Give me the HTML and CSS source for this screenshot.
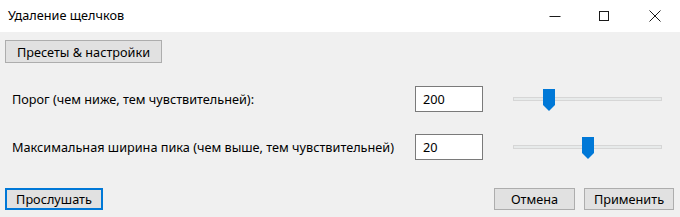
FILE: index.html
```html
<!DOCTYPE html>
<html lang="ru">
<head>
<meta charset="utf-8">
<title>Удаление щелчков</title>
<link rel="stylesheet" href="styles.css">
</head>
<body>
<div class="window">
  <div class="titlebar">
    <span class="title">Удаление щелчков</span>
    <div class="controls">
      <span class="ctl">
        <svg width="12" height="12" viewBox="0 0 12 12"><path d="M0.5 6.5H11.5" stroke="#1a1a1a" stroke-width="1"/></svg>
      </span>
      <span class="ctl">
        <svg width="12" height="12" viewBox="0 0 12 12"><rect x="1.5" y="1.5" width="9" height="9" fill="none" stroke="#1a1a1a" stroke-width="1"/></svg>
      </span>
      <span class="ctl">
        <svg width="12" height="12" viewBox="0 0 12 12"><path d="M0.5 0.5L11.5 11.5M11.5 0.5L0.5 11.5" stroke="#1a1a1a" stroke-width="1"/></svg>
      </span>
    </div>
  </div>
  <div class="content">
    <button class="btn presets">Пресеты &amp; настройки</button>
    <div class="rows">
      <div class="row">
        <span class="label">Порог (чем ниже, тем чувствительней):</span>
        <div class="textbox">200</div>
        <div class="slider">
          <div class="track"></div>
          <svg class="thumb" style="left:30px" width="12" height="22" viewBox="0 0 12 22"><path d="M0 0H12V16L6 22L0 16Z" fill="#0078d7"/></svg>
        </div>
      </div>
      <div class="row">
        <span class="label">Максимальная ширина пика (чем выше, тем чувствительней)</span>
        <div class="textbox">20</div>
        <div class="slider">
          <div class="track"></div>
          <svg class="thumb" style="left:69px" width="12" height="22" viewBox="0 0 12 22"><path d="M0 0H12V16L6 22L0 16Z" fill="#0078d7"/></svg>
        </div>
      </div>
    </div>
    <div class="footer">
      <button class="btn focused listen">Прослушать</button>
      <div class="spacer"></div>
      <button class="btn cancel">Отмена</button>
      <button class="btn apply">Применить</button>
    </div>
  </div>
</div>
</body>
</html>
```
FILE: styles.css
```css
html, body {
  margin: 0;
  padding: 0;
  background: #f0f0f0;
}
body {
  font-family: "Noto Sans", "Open Sans", sans-serif;
  font-size: 12.7px;
  color: #000;
}
.window {
  width: 680px;
  height: 217px;
  display: flex;
  flex-direction: column;
  background: #f0f0f0;
  overflow: hidden;
}
.titlebar {
  height: 32px;
  background: #fff;
  display: flex;
  align-items: center;
  justify-content: space-between;
  flex-shrink: 0;
}
.title {
  padding-left: 8px;
  font-size: 12.7px;
  color: #000;
  margin-top: -2px;
}
.controls {
  display: flex;
  height: 32px;
  align-items: center;
}
.ctl {
  width: 52px;
  display: flex;
  justify-content: center;
  align-items: center;
}
.ctl:nth-child(1) { width: 46px; }
.ctl:nth-child(3) { width: 50px; }
.content {
  display: flex;
  flex-direction: column;
  padding: 8px 6px 0 5px;
}
.btn {
  font-family: inherit;
  font-size: 12.7px;
  color: #000;
  background: #e1e1e1;
  border: 1px solid #adadad;
  border-radius: 0;
  padding: 0;
  margin: 0;
  display: flex;
  align-items: center;
  justify-content: center;
  box-sizing: border-box;
}
.presets {
  width: 157px;
  height: 23px;
}
.rows {
  display: flex;
  flex-direction: column;
  gap: 22px;
  margin-top: 23px;
}
.row {
  display: grid;
  grid-template-columns: 403px 68px 179px;
  align-items: center;
  height: 26px;
  padding-left: 7px;
}
.label {
  white-space: nowrap;
}
.textbox {
  height: 26px;
  box-sizing: border-box;
  background: #fff;
  border: 1px solid #7a7a7a;
  padding: 0 0 0 7px;
  display: flex;
  align-items: center;
}
.slider {
  position: relative;
  height: 26px;
  display: flex;
  align-items: center;
  margin-left: 30px;
}
.track {
  width: 100%;
  height: 4px;
  background: #e7eaea;
  border: 1px solid #d6d6d6;
  box-sizing: border-box;
}
.thumb {
  position: absolute;
  top: 3px;
}
.footer {
  display: flex;
  margin-top: 28px;
  gap: 9px;
  align-items: center;
}
.spacer {
  flex: 1;
}
.btn.focused {
  border: 2px solid #0078d7;
}
.listen {
  width: 98px;
  height: 22px;
}
.cancel {
  width: 81px;
  height: 22px;
}
.apply {
  width: 90px;
  height: 22px;
}
```
